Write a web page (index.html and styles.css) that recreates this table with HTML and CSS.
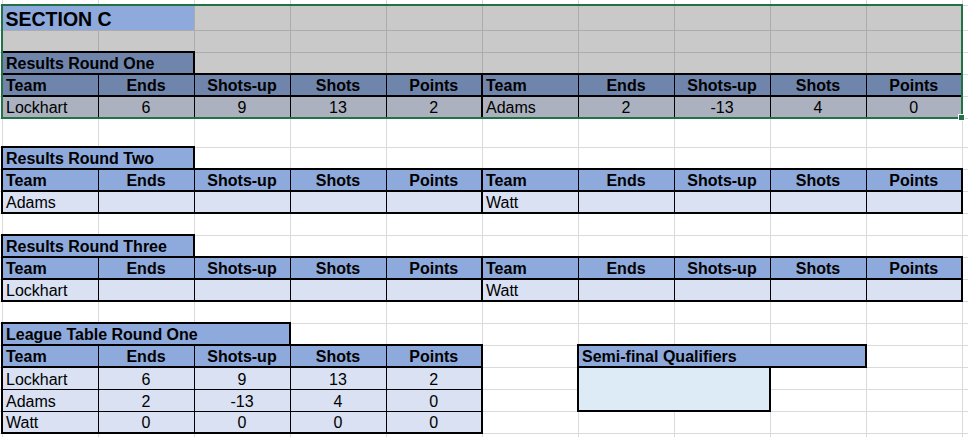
FILE: index.html
```html
<!DOCTYPE html>
<html>
<head>
<meta charset="utf-8">
<title>Section C</title>
<link rel="stylesheet" href="styles.css">
</head>
<body>
<div class="sheet">
<table class="grid">
<colgroup>
<col class="c0"><col class="c"><col class="c"><col class="c"><col class="c"><col class="c"><col class="c"><col class="c"><col class="c"><col class="c"><col class="c"><col class="cz">
</colgroup>
<tr class="h5"><td></td><td></td><td></td><td></td><td></td><td></td><td></td><td></td><td></td><td></td><td></td><td></td></tr>
<tr class="h25"><td></td><td colspan="2" class="sec">SECTION C</td><td></td><td></td><td></td><td></td><td></td><td></td><td></td><td></td><td></td></tr>
<tr class="h22"><td></td><td></td><td></td><td></td><td></td><td></td><td></td><td></td><td></td><td></td><td></td><td></td></tr>
<tr class="h22"><td></td><td colspan="2" class="t">Results Round One</td><td></td><td></td><td></td><td></td><td></td><td></td><td></td><td></td><td></td></tr>
<tr class="h22"><td></td><td class="hd l bl">Team</td><td class="hd">Ends</td><td class="hd">Shots-up</td><td class="hd">Shots</td><td class="hd br">Points</td><td class="hd l">Team</td><td class="hd">Ends</td><td class="hd">Shots-up</td><td class="hd">Shots</td><td class="hd br">Points</td><td></td></tr>
<tr class="h22"><td></td><td class="dt l bl last">Lockhart</td><td class="dt last">6</td><td class="dt last">9</td><td class="dt last">13</td><td class="dt br last">2</td><td class="dt l last">Adams</td><td class="dt last">2</td><td class="dt last">-13</td><td class="dt last">4</td><td class="dt br last">0</td><td></td></tr>
<tr class="h29"><td></td><td></td><td></td><td></td><td></td><td></td><td></td><td></td><td></td><td></td><td></td><td></td></tr>
<tr class="h22"><td></td><td colspan="2" class="t">Results Round Two</td><td></td><td></td><td></td><td></td><td></td><td></td><td></td><td></td><td></td></tr>
<tr class="h22"><td></td><td class="hd l bl">Team</td><td class="hd">Ends</td><td class="hd">Shots-up</td><td class="hd">Shots</td><td class="hd br">Points</td><td class="hd l">Team</td><td class="hd">Ends</td><td class="hd">Shots-up</td><td class="hd">Shots</td><td class="hd br">Points</td><td></td></tr>
<tr class="h22"><td></td><td class="dt l bl last">Adams</td><td class="dt last"></td><td class="dt last"></td><td class="dt last"></td><td class="dt br last"></td><td class="dt l last">Watt</td><td class="dt last"></td><td class="dt last"></td><td class="dt last"></td><td class="dt br last"></td><td></td></tr>
<tr class="h22"><td></td><td></td><td></td><td></td><td></td><td></td><td></td><td></td><td></td><td></td><td></td><td></td></tr>
<tr class="h22"><td></td><td colspan="2" class="t">Results Round Three</td><td></td><td></td><td></td><td></td><td></td><td></td><td></td><td></td><td></td></tr>
<tr class="h22"><td></td><td class="hd l bl">Team</td><td class="hd">Ends</td><td class="hd">Shots-up</td><td class="hd">Shots</td><td class="hd br">Points</td><td class="hd l">Team</td><td class="hd">Ends</td><td class="hd">Shots-up</td><td class="hd">Shots</td><td class="hd br">Points</td><td></td></tr>
<tr class="h22"><td></td><td class="dt l bl last">Lockhart</td><td class="dt last"></td><td class="dt last"></td><td class="dt last"></td><td class="dt br last"></td><td class="dt l last">Watt</td><td class="dt last"></td><td class="dt last"></td><td class="dt last"></td><td class="dt br last"></td><td></td></tr>
<tr class="h22"><td></td><td></td><td></td><td></td><td></td><td></td><td></td><td></td><td></td><td></td><td></td><td></td></tr>
<tr class="h22"><td></td><td colspan="3" class="t">League Table Round One</td><td></td><td></td><td></td><td></td><td></td><td></td><td></td><td></td></tr>
<tr class="h22"><td></td><td class="hd l bl">Team</td><td class="hd">Ends</td><td class="hd">Shots-up</td><td class="hd">Shots</td><td class="hd br">Points</td><td></td><td colspan="3" class="t">Semi-final Qualifiers</td><td></td><td></td></tr>
<tr class="h22"><td></td><td class="dt l bl">Lockhart</td><td class="dt">6</td><td class="dt">9</td><td class="dt">13</td><td class="dt br">2</td><td></td><td colspan="2" rowspan="2" class="sf"></td><td></td><td></td><td></td></tr>
<tr class="h22"><td></td><td class="dt l bl">Adams</td><td class="dt">2</td><td class="dt">-13</td><td class="dt">4</td><td class="dt br">0</td><td></td><td></td><td></td><td></td></tr>
<tr class="h22"><td></td><td class="dt l bl last">Watt</td><td class="dt last">0</td><td class="dt last">0</td><td class="dt last">0</td><td class="dt br last">0</td><td></td><td></td><td></td><td></td><td></td><td></td></tr>
<tr class="h22"><td></td><td></td><td></td><td></td><td></td><td></td><td></td><td></td><td></td><td></td><td></td><td></td></tr>
</table>
<div class="sel">
  <div class="sel-top"><div class="active"></div><div class="shade"></div></div>
  <div class="shade sel-rest"></div>
  <div class="handle"></div>
</div>
</div>
</body>
</html>
```
FILE: styles.css
```css
html, body {
  margin: 0;
  padding: 0;
  background: #fff;
}
body {
  font-family: "Liberation Sans", Arial, sans-serif;
  font-size: 16px;
  color: #000;
  overflow: hidden;
}
.sheet {
  position: relative;
  width: 968px;
  height: 437px;
  overflow: hidden;
}
.grid {
  border-collapse: collapse;
  table-layout: fixed;
  width: 968px;
}
.grid col.c0 { width: 2px; }
.grid col.c { width: 96px; }
.grid col.cz { width: 6px; }
.grid td {
  padding: 0 3px 1px 3px;
  border-right: 1px solid #dadada;
  border-bottom: 1px solid #dadada;
  vertical-align: bottom;
  line-height: 17px;
  white-space: nowrap;
  overflow: hidden;
}
.h5 { height: 5px; }
.h22 { height: 22px; }
.h25 { height: 25px; }
.h29 { height: 29px; }

.grid td.sec {
  background: #8ea9db;
  font-weight: bold;
  font-size: 19.5px;
  line-height: 22px;
  padding-bottom: 0;
}
.grid td.t {
  background: #8ea9db;
  font-weight: bold;
  text-align: left;
  border: 2px solid #000;
}
.grid td.hd {
  background: #8ea9db;
  font-weight: bold;
  text-align: center;
  border: 1px solid #000;
  border-top: 2px solid #000;
  border-bottom: 2px solid #000;
}
.grid td.dt {
  background: #d9e1f2;
  text-align: center;
  border: 1px solid #000;
}
.grid td.sf {
  background: #ddebf7;
  border: 2px solid #000;
}
.grid td.l { text-align: left; }
.grid td.bl { border-left: 2px solid #000; }
.grid td.br { border-right: 2px solid #000; }
.grid td.last { border-bottom: 2px solid #000; }

.sel {
  position: absolute;
  box-sizing: border-box;
  left: 1px;
  top: 4px;
  width: 962px;
  height: 115px;
  border: 2px solid #217346;
  display: flex;
  flex-direction: column;
}
.sel-top {
  display: flex;
  height: 24px;
}
.active {
  width: 191px;
}
.shade {
  flex: 1;
  background: rgba(0, 0, 0, 0.21);
}
.sel-rest {
  flex: 1;
}
.handle {
  position: absolute;
  box-sizing: border-box;
  right: -4px;
  bottom: -4px;
  width: 7px;
  height: 7px;
  background: #217346;
  border: 1px solid #fff;
}
```
